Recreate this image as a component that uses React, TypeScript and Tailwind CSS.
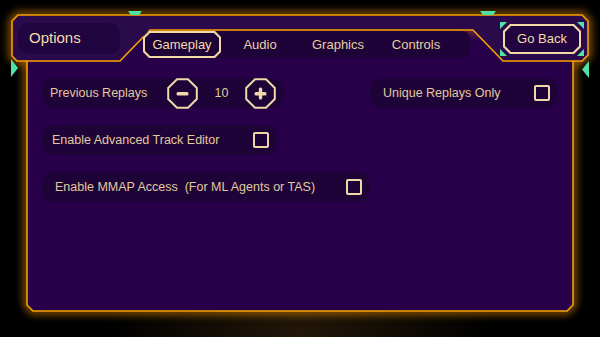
import { ReactNode } from "react";

const octagon = (c: number) =>
  `polygon(${c}px 0, calc(100% - ${c}px) 0, 100% ${c}px, 100% calc(100% - ${c}px), calc(100% - ${c}px) 100%, ${c}px 100%, 0 calc(100% - ${c}px), 0 ${c}px)`;

const TOP_BAR =
  "M12,21 L18,15 L582,15 L588,21 L588,55 L582,61 L503,61 L473,30 L150,30 L120,61 L17,61 L12,56 Z";
const BODY =
  "M27,61 L120,61 L150,30 L473,30 L503,61 L573,61 L573,305 L567,311 L33,311 L27,305 Z";
const BODY_EDGES = "M27,61 L27,305 L33,311 L567,311 L573,305 L573,61";

const Frame = () => (
  <svg
    className="absolute inset-0"
    width={600}
    height={337}
    viewBox="0 0 600 337"
  >
    <defs>
      <filter id="glow" x="-20%" y="-20%" width="140%" height="140%">
        <feGaussianBlur stdDeviation="4" />
      </filter>
      <linearGradient id="notch" x1="0" y1="30" x2="0" y2="61" gradientUnits="userSpaceOnUse">
        <stop offset="0" stopColor="#c8641a" stopOpacity="0.35" />
        <stop offset="0.35" stopColor="#c8641a" stopOpacity="0" />
      </linearGradient>
    </defs>
    <g filter="url(#glow)" stroke="#ff9a00" strokeWidth="5" fill="none" opacity="0.8">
      <path d={TOP_BAR} />
      <path d={BODY_EDGES} />
    </g>
    <path d={TOP_BAR} fill="#2b0a4c" />
    <path d={BODY} fill="#28004a" />
    <path d="M120,61 L150,30 L473,30 L503,61 Z" fill="url(#notch)" />
    <g stroke="#f7a200" strokeWidth="1.6" fill="none" strokeLinejoin="miter">
      <path d={TOP_BAR} />
      <path d={BODY_EDGES} />
    </g>
    <g fill="#4fe3a5">
      <polygon points="128,11 142,11 139,15 131,15" />
      <polygon points="480,11 496,11 493,15 483,15" />
      <polygon points="11,59 18,68 11,77" />
      <polygon points="589,61 582,69.5 589,78" />
    </g>
  </svg>
);

const Checkbox = () => (
  <span className="block h-4 w-4 rounded-[2px] border-2 border-[#f0d8a8]" />
);

const Pill = ({ className, children }: { className: string; children: ReactNode }) => (
  <div
    className={`flex h-[30px] items-center rounded-[12px] bg-[#1e0338] text-[12.5px] text-[#e2c99e] ${className}`}
  >
    {children}
  </div>
);

const StepButton = ({ plus }: { plus?: boolean }) => (
  <svg width={31} height={31} viewBox="0 0 31 31">
    <polygon
      points="10,1.2 21,1.2 29.8,10 29.8,21 21,29.8 10,29.8 1.2,21 1.2,10"
      fill="#1e0338"
      stroke="#f0d8a8"
      strokeWidth="2"
    />
    <rect x="9.5" y="14" width="12" height="3.4" rx="1.5" fill="#f0d8a8" />
    {plus && <rect x="13.8" y="9.5" width="3.4" height="12" rx="1.5" fill="#f0d8a8" />}
  </svg>
);

const tabs = ["Gameplay", "Audio", "Graphics", "Controls"];

const App = () => {
  return (
    <div className="relative h-[337px] w-[600px] overflow-hidden bg-[radial-gradient(ellipse_at_50%_100%,#221708_0%,#000_45%)] font-['Liberation_Sans',Arial,sans-serif]">
      <Frame />
      <div className="relative flex flex-col">
        <div className="flex h-[61px] items-start">
          <div className="ml-[18px] mt-[23px] flex h-[31px] w-[102px] items-center rounded-[10px] bg-[#1f0440] pl-[11px] text-[15px] text-[#f3dcaa]">
            Options
          </div>
          <div className="ml-[23px] mt-[31px] flex h-[27px] w-[327px] items-center rounded-[8px] bg-[#1d0338]">
            {tabs.map((tab, index) =>
              index === 0 ? (
                <div
                  key={tab}
                  className="h-full w-[78px] bg-[#f2d9a6] p-[2px]"
                  style={{ clipPath: octagon(6) }}
                >
                  <div
                    className="flex h-full w-full items-center justify-center bg-[#1d0338] text-[13px] text-[#f3dcaa]"
                    style={{ clipPath: octagon(5) }}
                  >
                    {tab}
                  </div>
                </div>
              ) : (
                <div
                  key={tab}
                  className="flex h-full w-[78px] items-center justify-center text-[13px] text-[#e8cfa0]"
                >
                  {tab}
                </div>
              ),
            )}
          </div>
          <div className="relative ml-auto mr-[19px] mt-[24px] h-[30px] w-[78px]">
            <div
              className="h-full w-full bg-[#f2d9a6] p-[2px]"
              style={{ clipPath: octagon(7) }}
            >
              <div
                className="flex h-full w-full items-center justify-center bg-[#220540] text-[13px] text-[#f3dcaa]"
                style={{ clipPath: octagon(6) }}
              >
                Go Back
              </div>
            </div>
            <span className="absolute -left-[3px] -top-[2px] h-[7px] w-[7px] bg-[#4fe3a5] [clip-path:polygon(0_0,100%_0,0_100%)]" />
            <span className="absolute -right-[3px] -top-[2px] h-[7px] w-[7px] bg-[#4fe3a5] [clip-path:polygon(0_0,100%_0,100%_100%)]" />
            <span className="absolute -bottom-[2px] -left-[3px] h-[7px] w-[7px] bg-[#4fe3a5] [clip-path:polygon(0_0,100%_100%,0_100%)]" />
            <span className="absolute -bottom-[2px] -right-[3px] h-[7px] w-[7px] bg-[#4fe3a5] [clip-path:polygon(100%_0,100%_100%,0_100%)]" />
          </div>
        </div>

        <div className="mt-[17px] flex items-start justify-between pl-[42px] pr-[42px]">
          <div className="flex flex-col gap-[17px]">
            <Pill className="w-[242px] pl-[8px]">
              <span className="w-[117px]">Previous Replays</span>
              <StepButton />
              <span className="w-[47px] text-center">10</span>
              <StepButton plus />
            </Pill>
            <Pill className="w-[235px] justify-between pl-[10px] pr-[8px]">
              <span>Enable Advanced Track Editor</span>
              <Checkbox />
            </Pill>
            <Pill className="w-[328px] justify-between pl-[13px] pr-[8px]">
              <span className="whitespace-pre">Enable MMAP Access  (For ML Agents or TAS)</span>
              <Checkbox />
            </Pill>
          </div>
          <Pill className="w-[188px] justify-between pl-[13px] pr-[8px]">
            <span>Unique Replays Only</span>
            <Checkbox />
          </Pill>
        </div>
      </div>
    </div>
  );
};

export default App;
